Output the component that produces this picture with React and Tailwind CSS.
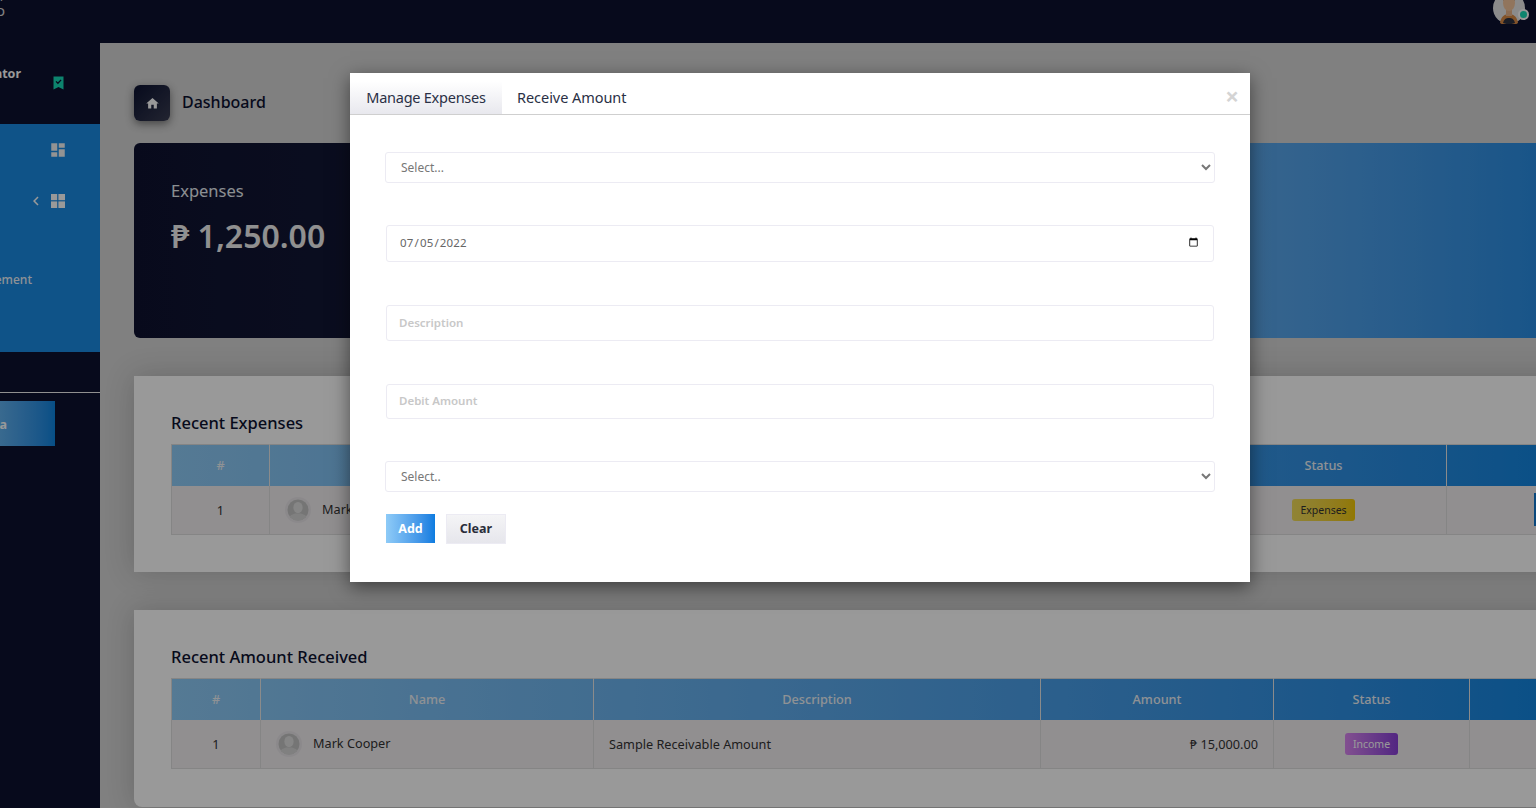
import { MdHome, MdDashboard, MdChevronLeft } from "react-icons/md";

function GridIcon() {
  return (
    <svg width="14" height="14" viewBox="0 0 14 14" fill="currentColor">
      <rect x="0" y="0" width="6.2" height="6.2" />
      <rect x="7.4" y="0" width="6.6" height="6.2" />
      <rect x="0" y="7.4" width="6.2" height="6.6" />
      <rect x="7.4" y="7.4" width="6.6" height="6.6" />
    </svg>
  );
}

function BookmarkIcon() {
  return (
    <svg width="11" height="14" viewBox="0 0 11 14">
      <path d="M0.5 0.5h10v13l-5-2.4-5 2.4z" fill="#17dcb8" />
      <path d="M3 5.4l1.9 1.9 3.2-3.4" fill="none" stroke="#0c1130" strokeWidth="1.3" />
    </svg>
  );
}

function PersonAvatar() {
  return (
    <span className="inline-flex items-center justify-center w-[26px] h-[26px] rounded-full bg-[#e8e5e8]">
      <svg width="22" height="22" viewBox="0 0 22 22">
        <defs>
          <clipPath id="person-clip">
            <circle cx="11" cy="11" r="10.5" />
          </clipPath>
        </defs>
        <g clipPath="url(#person-clip)">
          <rect width="22" height="22" fill="#c4c4c4" />
          <ellipse cx="11" cy="8.5" rx="4.6" ry="5.6" fill="#e0e0e0" />
          <path d="M1 22c0-5 4-6.6 7-7.6h6c3 1 7 2.6 7 7.6z" fill="#d6d6d6" />
        </g>
      </svg>
    </span>
  );
}

function UserAvatar() {
  return (
    <svg width="32" height="32" viewBox="0 0 32 32">
      <circle cx="16" cy="16" r="16" fill="#e8e8e8" />
      <path d="M7 31c1-7 5-9 9-9s8 2 9 9a16 16 0 0 1-18 0z" fill="#d98a45" />
      <path d="M10 31c1-4 3-5 6-5s5 1 6 5a16 16 0 0 1-12 0z" fill="#2c3140" />
      <rect x="13" y="16" width="6" height="8" fill="#e8b48a" />
      <ellipse cx="16" cy="11" rx="6" ry="8" fill="#f2c49c" />
      <path d="M10 9c0-6 3-9 6-9s6 3 6 9c-1-3-3-4-6-4s-5 1-6 4z" fill="#7a4a28" />
    </svg>
  );
}

function Badge({ className, children }) {
  return <span className={"inline-block rounded-[3px] text-[10.5px] leading-[22px] h-[22px] px-[8px] " + className}>{children}</span>;
}

const th = "border-l border-[#e8e8e8] first:border-l-0 text-[12.7px] font-medium text-[#eef3f8] text-center h-[41px]";
const td = "border-l border-[#dedede] first:border-l-0 text-[12.7px] text-[#333] h-[49px]";

function Card({ title, className, children }) {
  return (
    <section className={"w-[1500px] bg-white pt-[37px] pl-[37px] shadow-[0_0_28px_rgba(0,0,0,0.18)] " + className}>
      <h2 className="text-[16.5px] leading-[20px] font-medium text-[#0c1130] mb-[11px]">{title}</h2>
      {children}
    </section>
  );
}

function Field({ className, placeholder }) {
  return (
    <input
      placeholder={placeholder}
      className={"block w-[828px] ml-px pl-[12px] pb-[2px] border border-[#ecebf3] rounded-[3px] bg-white text-[11.5px] font-semibold outline-none placeholder:text-[#c8c8c8] " + className}
    />
  );
}

export default function App() {
  return (
    <div className="relative w-[1536px] h-[808px] overflow-hidden bg-[#d5d5d5] font-['Noto_Sans',sans-serif]">
      <header className="h-[43px] bg-[#0c1130] flex justify-between">
        <div className="w-[5px] h-[28px] overflow-hidden flex flex-col items-end text-[13px] leading-[11px] text-[#d8d8d8] -mt-[9px]">
          <span>r</span>
          <span className="text-[15px] leading-[16px]">o</span>
        </div>
        <div className="relative h-[24px] w-[32px] mr-[11px] overflow-visible">
          <div className="h-[24px] overflow-hidden">
            <div className="-mt-[8px]">
              <UserAvatar />
            </div>
          </div>
          <span className="absolute right-[-4px] top-[9px] w-[11px] h-[11px] rounded-full bg-[#17dcb8] border-2 border-white" />
        </div>
      </header>

      <div className="flex h-[765px]">
        <aside className="w-[100px] shrink-0 overflow-hidden flex flex-col items-end bg-[#0c1130]">
          <div className="h-[81px] w-full flex justify-end pr-[36px] gap-[32px] whitespace-nowrap">
            <span className="text-[12.5px] font-bold text-white mt-[22px] leading-[18px]">Administrator</span>
            <span className="mt-[33px]">
              <BookmarkIcon />
            </span>
          </div>
          <nav className="h-[228px] w-full bg-[#198ae3] text-white flex flex-col items-end">
            <div className="h-[51px] w-full flex items-center justify-end pr-[33px]">
              <MdDashboard size={18} className="text-[#f5f5f5]" />
            </div>
            <div className="h-[52px] w-full flex items-center justify-end pr-[35px] gap-[6px]">
              <MdChevronLeft size={18} />
              <GridIcon />
            </div>
            <div className="w-full flex justify-end pr-[68px] mt-[44px] text-[12px] leading-[18px] font-medium whitespace-nowrap text-[#eef4fa]">
              Expenses Management
            </div>
          </nav>
          <div className="h-[40px] shrink-0" />
          <hr className="w-full border-t border-[#f0f0f0]" />
          <button className="self-start mt-[8px] w-[55px] h-[45px] flex items-center justify-end pr-[48px] pt-[3px] whitespace-nowrap text-[12.5px] font-bold text-white bg-linear-to-r from-[#5fb0ee] to-[#0a84e0]">
            Data
          </button>
        </aside>

        <main className="flex-1 min-w-0 overflow-hidden pl-[34px] pt-[42px]">
          <div className="flex items-center h-[36px]">
            <span className="w-[36px] h-[36px] rounded-[6px] flex items-center justify-center text-white bg-linear-to-br from-[#0c1130] to-[#3a3d52] shadow-[0_3px_8px_rgba(0,0,0,0.45)]">
              <MdHome size={15} />
            </span>
            <h1 className="ml-[12px] pb-[2px] text-[16px] font-medium text-[#0c1130]">Dashboard</h1>
          </div>

          <div className="flex w-[1500px] h-[195px] mt-[22px]">
            <div className="w-[650px] pl-[37px] pt-[36px] rounded-l-[6px] text-white bg-linear-to-r from-[#0e1230] to-[#1c2140]">
              <p className="text-[16.5px] leading-[24px] text-[#e8eef4]">Expenses</p>
              <p className="text-[32px] leading-[44px] font-semibold mt-[11px] text-[#f0f0f0]">₱ 1,250.00</p>
            </div>
            <div className="flex-1 bg-linear-to-r from-[#9fd3fa] to-[#0a84e0]" />
          </div>

          <Card title="Recent Expenses" className="h-[196px] mt-[38px]">
            <table className="w-[1400px] table-fixed border-collapse border border-[#dedede]">
              <colgroup>
                <col className="w-[98px]" />
                <col className="w-[331px]" />
                <col className="w-[400px]" />
                <col className="w-[200px]" />
                <col className="w-[246px]" />
                <col />
              </colgroup>
              <thead className="bg-linear-to-r from-[#8ecbf7] to-[#0a84e0]">
                <tr>
                  <th className={th}>#</th>
                  <th className={th}>Name</th>
                  <th className={th}>Description</th>
                  <th className={th}>Amount</th>
                  <th className={th}>Status</th>
                  <th className={th}></th>
                </tr>
              </thead>
              <tbody className="bg-[#f2eef1]">
                <tr>
                  <td className={td + " text-center pt-[2px]"}>1</td>
                  <td className={td + " pl-[15px]"}>
                    <div className="flex items-center gap-[11px]">
                      <PersonAvatar />
                      <span className="pb-[1px]">Mark Cooper</span>
                    </div>
                  </td>
                  <td className={td + " pl-[15px] pt-[2px]"}>Sample Expense</td>
                  <td className={td + " text-right pr-[15px] pt-[2px]"}>₱ 1,250.00</td>
                  <td className={td + " text-center"}>
                    <Badge className="bg-linear-to-r from-[#f0dc5a] to-[#f2c800]">Expenses</Badge>
                  </td>
                  <td className={td + " pl-[87px]"}>
                    <span className="block w-[36px] h-[33px] bg-[#1278cf]" />
                  </td>
                </tr>
              </tbody>
            </table>
          </Card>

          <Card title="Recent Amount Received" className="h-[197px] mt-[38px] rounded-bl-[8px]">
            <table className="w-[1400px] table-fixed border-collapse border border-[#dedede]">
              <colgroup>
                <col className="w-[89px]" />
                <col className="w-[333px]" />
                <col className="w-[447px]" />
                <col className="w-[233px]" />
                <col className="w-[196px]" />
                <col />
              </colgroup>
              <thead className="bg-linear-to-r from-[#8ecbf7] to-[#0a84e0]">
                <tr>
                  <th className={th}>#</th>
                  <th className={th}>Name</th>
                  <th className={th}>Description</th>
                  <th className={th}>Amount</th>
                  <th className={th}>Status</th>
                  <th className={th}></th>
                </tr>
              </thead>
              <tbody className="bg-[#f2eef1]">
                <tr>
                  <td className={td + " text-center pt-[2px]"}>1</td>
                  <td className={td + " pl-[15px]"}>
                    <div className="flex items-center gap-[11px]">
                      <PersonAvatar />
                      <span className="pb-[1px]">Mark Cooper</span>
                    </div>
                  </td>
                  <td className={td + " pl-[15px] pt-[2px]"}>Sample Receivable Amount</td>
                  <td className={td + " text-right pr-[15px] pt-[2px]"}>₱ 15,000.00</td>
                  <td className={td + " text-center"}>
                    <Badge className="text-white bg-linear-to-r from-[#d985f0] to-[#8a3fd8]">Income</Badge>
                  </td>
                  <td className={td}></td>
                </tr>
              </tbody>
            </table>
          </Card>
        </main>
      </div>

      {/* modal backdrop + dialog */}
      <div className="absolute inset-0 bg-black/40 pl-[350px] pt-[73px]">
        <div className="w-[900px] h-[509px] bg-white shadow-[0_5px_18px_rgba(0,0,0,0.5)]">
          <div className="h-[42px] pt-[8px] border-b border-[#cfcfcf] flex items-stretch relative">
            <button className="w-[152px] text-[14.5px] tracking-[-0.25px] text-[#2a3045] bg-linear-to-b from-[#ffffff] to-[#e8e8ee]">Manage Expenses</button>
            <button className="ml-[15px] text-[14.5px] tracking-[-0.05px] text-[#2a3045]">Receive Amount</button>
            <span className="absolute right-[11px] top-[8px] text-[24px] leading-[30px] font-bold text-[#d4d4d4]">×</span>
          </div>
          <div className="pl-[35px] pt-[37px]">
            <select className="block w-[830px] h-[31px] pl-[11px] pr-[4px] border border-[#ecebf3] rounded-[3px] bg-white text-[12px] text-[#777]">
              <option>Select...</option>
            </select>
            <input
              type="date"
              defaultValue="2022-07-05"
              className="block w-[828px] h-[37px] ml-px mt-[42px] pl-[12px] pr-[12px] pb-[1px] border border-[#ecebf3] rounded-[3px] bg-white text-[11.5px] tracking-[0.15px] text-[#666] outline-none"
            />
            <Field placeholder="Description" className="h-[36px] mt-[43px]" />
            <Field placeholder="Debit Amount" className="h-[35px] mt-[43px]" />
            <select className="block w-[830px] h-[31px] mt-[42px] pl-[11px] pr-[4px] border border-[#ecebf3] rounded-[3px] bg-white text-[12px] text-[#777]">
              <option>Select..</option>
            </select>
            <div className="flex items-start gap-[11px] mt-[22px] ml-px">
              <button className="w-[49px] h-[29px] pt-[1px] text-[12.5px] font-bold text-white bg-linear-to-r from-[#8ecbf7] to-[#0a7ce0]">Add</button>
              <button className="w-[60px] h-[30px] text-[12.5px] font-bold text-[#2a2d3a] border border-[#ecebf3] bg-linear-to-b from-[#f4f4f6] to-[#e6e6ec]">Clear</button>
            </div>
          </div>
        </div>
      </div>
    </div>
  );
}
